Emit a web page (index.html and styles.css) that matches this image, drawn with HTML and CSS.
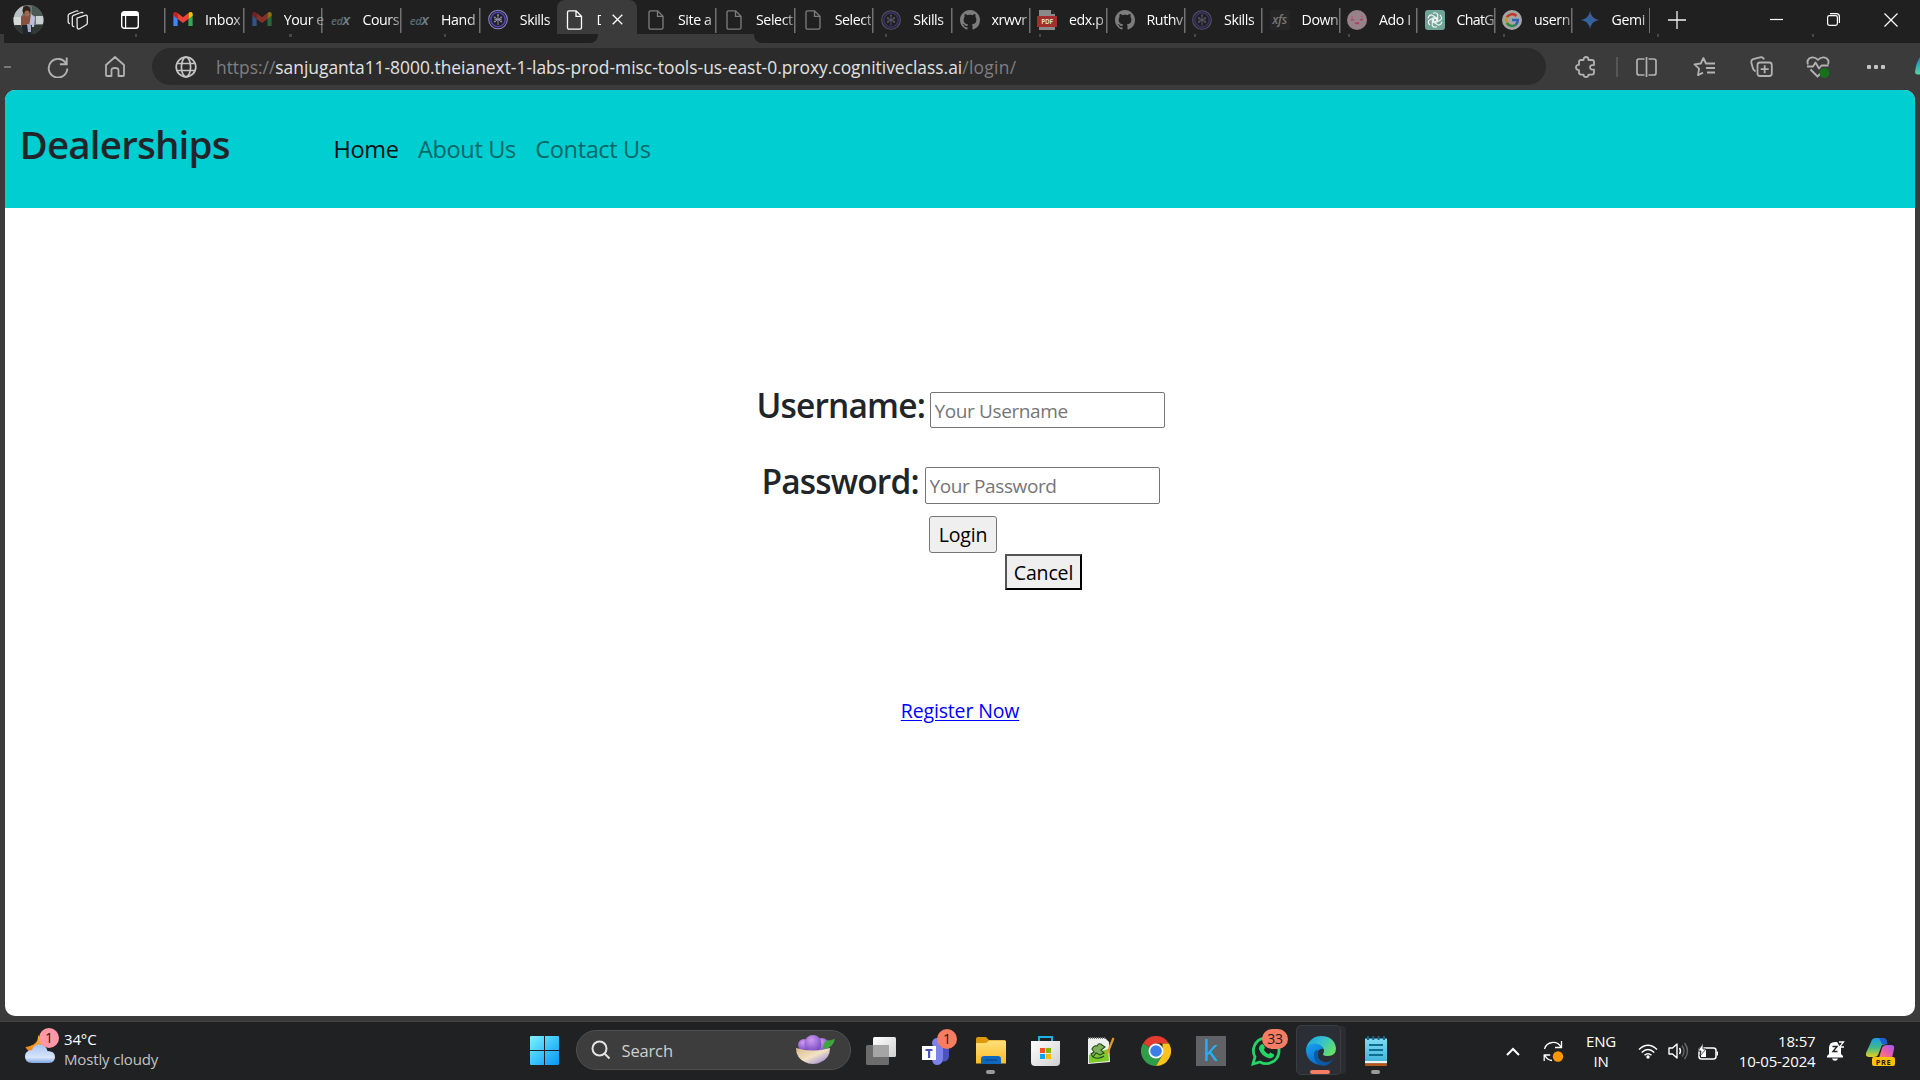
FILE: index.html
```html
<!DOCTYPE html>
<html lang="en">
<head>
<meta charset="utf-8">
<title>Dealerships</title>
<link rel="stylesheet" href="styles.css">
</head>
<body>
<svg class="defs" aria-hidden="true">
  <defs>
    <linearGradient id="g-win" x1="0" y1="0" x2="1" y2="1"><stop offset="0" stop-color="#7df3ff"/><stop offset=".5" stop-color="#3cc4fb"/><stop offset="1" stop-color="#0a93f5"/></linearGradient>
    <linearGradient id="g-folder" x1="0" y1="0" x2="0" y2="1"><stop offset="0" stop-color="#ffe07a"/><stop offset="1" stop-color="#fdbb25"/></linearGradient>
    <linearGradient id="g-cloud" x1="0" y1="0" x2="0" y2="1"><stop offset="0" stop-color="#a5c3f5"/><stop offset=".7" stop-color="#d8e5fb"/><stop offset="1" stop-color="#7ea3e4"/></linearGradient>
    <linearGradient id="g-moon" x1="0" y1="0" x2="0" y2="1"><stop offset="0" stop-color="#fdbd2c"/><stop offset="1" stop-color="#f07c16"/></linearGradient>
    <linearGradient id="g-bowl" x1="0" y1="0" x2="1" y2="1"><stop offset="0" stop-color="#d9b88a"/><stop offset=".5" stop-color="#f2e3c4"/><stop offset="1" stop-color="#8a74e0"/></linearGradient>
    <radialGradient id="g-yam" cx=".4" cy=".3" r=".8"><stop offset="0" stop-color="#cf9bf3"/><stop offset="1" stop-color="#6a3fb8"/></radialGradient>
    <linearGradient id="g-edge-top" x1="0" y1="0" x2="1" y2=".6"><stop offset="0" stop-color="#1b9de2"/><stop offset=".5" stop-color="#35c1cf"/><stop offset="1" stop-color="#62e06a"/></linearGradient>
    <linearGradient id="g-edge-low" x1="0" y1="0" x2=".6" y2="1"><stop offset="0" stop-color="#1aa4ee"/><stop offset="1" stop-color="#0668c8"/></linearGradient>
    <linearGradient id="g-gem" x1="0" y1="1" x2="1" y2="0"><stop offset="0" stop-color="#2c7f9c"/><stop offset=".5" stop-color="#345f9e"/><stop offset="1" stop-color="#5a5a86"/></linearGradient>
    <linearGradient id="g-cop-l" x1="0" y1="0" x2="0" y2="1"><stop offset="0" stop-color="#1b9be8"/><stop offset=".5" stop-color="#3fb98a"/><stop offset="1" stop-color="#e8cf1e"/></linearGradient>
    <linearGradient id="g-cop-r" x1="1" y1="0" x2="0" y2="1"><stop offset="0" stop-color="#9a5cf0"/><stop offset=".5" stop-color="#e65bb0"/><stop offset="1" stop-color="#ff8a5c"/></linearGradient>
    <linearGradient id="g-note" x1="0" y1="0" x2="0" y2="1"><stop offset="0" stop-color="#7fdcf2"/><stop offset="1" stop-color="#3fb2d8"/></linearGradient>
    <linearGradient id="g-side" x1="0" y1="0" x2="0" y2="1"><stop offset="0" stop-color="#1583d8"/><stop offset="1" stop-color="#4fd8a0"/></linearGradient>
    <linearGradient id="g-grey" x1="0" y1="0" x2="1" y2="1"><stop offset="0" stop-color="#fff"/><stop offset="1" stop-color="#cfcfcf"/></linearGradient>
    <clipPath id="c-avatar"><circle cx="15.500" cy="15" r="15"/></clipPath>

    <symbol id="i-gmail" viewBox="0 0 18 14"><path d="M0 2v11h4V6z" fill="#4285f4"/><path d="M18 2v11h-4V6z" fill="#34a853"/><path d="M14 1v5.500l4-3V1.500Q17-1 14 1z" fill="#fbbc04"/><path d="M4 1v5.500l-4-3V1.500Q1-1 4 1z" fill="#c5221f"/><path d="M4 1l5 3.800L14 1v5.500L9 10.200 4 6.500z" fill="#ea4335"/></symbol>
    <symbol id="i-skills" viewBox="0 0 20 20"><g fill="none" stroke="currentColor"><circle cx="10" cy="10" r="9.300" stroke-width="1.100"/><circle cx="10" cy="10" r="7.200" stroke-width="1.500" stroke="#5546b8"/></g><g fill="none" stroke="#8a86a8" stroke-width="1"><path d="M10 5v10.500M7 8l6 4M13 8l-6 4M6.500 10h7"/></g><g fill="#8a86a8"><circle cx="10" cy="5.500" r="1"/><circle cx="6.800" cy="8" r="1"/><circle cx="13.200" cy="8" r="1"/><circle cx="6.800" cy="12" r="1"/><circle cx="13.200" cy="12" r="1"/></g></symbol>
    <symbol id="i-file" viewBox="0 0 16 20"><path d="M1 2.500Q1 .8 2.600.8h7L15 6.300v11.200q0 1.700-1.600 1.700H2.600Q1 19.200 1 17.500zM9.500.8v5.600H15" fill="none" stroke="currentColor" stroke-width="1.300"/></symbol>
    <symbol id="i-github" viewBox="0 0 16 16"><path fill="currentColor" d="M8 0C3.580 0 0 3.580 0 8c0 3.540 2.290 6.530 5.470 7.590.4.070.55-.17.55-.38 0-.19-.01-.82-.01-1.490-2.010.37-2.530-.49-2.690-.94-.09-.23-.48-.94-.82-1.130-.28-.15-.68-.52-.01-.53.63-.01 1.080.58 1.230.82.72 1.210 1.870.87 2.330.66.07-.52.28-.87.51-1.070-1.780-.2-3.640-.89-3.640-3.950 0-.87.31-1.590.82-2.150-.08-.2-.36-1.020.08-2.120 0 0 .67-.21 2.200.82.64-.18 1.320-.27 2-.27s1.360.09 2 .27c1.530-1.040 2.200-.82 2.200-.82.44 1.100.16 1.920.08 2.120.51.56.82 1.270.82 2.150 0 3.070-1.870 3.750-3.650 3.950.29.25.54.73.54 1.480 0 1.070-.01 1.930-.01 2.200 0 .21.15.46.55.38A8 8 0 0 0 16 8c0-4.420-3.580-8-8-8z"/></symbol>
  </defs>
</svg>

<div class="browser">
  <header class="tabstrip">
    <div class="tabstrip-tools">
      <svg class="avatar" width="31" height="30" viewBox="0 0 31 30"><g clip-path="url(#c-avatar)"><rect width="31" height="30" fill="#6d7570"/><path d="M0 0h10v8L7 14H0z" fill="#b8c0c4"/><path d="M0 12h9v9H0z" fill="#d4d8d8"/><path d="M19 0h12v11H19z" fill="#4c5852"/><path d="M23 11h8v8h-8z" fill="#c9d0d2"/><path d="M0 20h31v10H0z" fill="#2f3834"/><path d="M8 12q6-5 13 0l-1 10H8z" fill="#84523f"/><path d="M18 9l4 3-1 10h-5z" fill="#b9bedc"/><ellipse cx="13.500" cy="5.500" rx="4" ry="4.500" fill="#2e201b"/><ellipse cx="14" cy="8.500" rx="2.600" ry="3" fill="#9c694f"/><path d="M9 20h10l-1 10h-8z" fill="#1d2530"/><path d="M14 19h4v8h-3z" fill="#a3a8c0"/></g></svg>
      <svg class="tool-workspaces" width="22" height="20" viewBox="0 0 22 20" fill="none" stroke="#e8e8e8" stroke-width="1.300" stroke-linejoin="round"><path d="M10 8.200L18 5.300q2.300-.6 2.300 1.500v6.400q0 1-1 1.500l-6.500 4q-2.300 1-2.600-1z"/><path d="M7.300 16.500q-2 .3-2-1.500V7q0-1.200 1.200-1.700L14 2.500q1.700-.4 2.200.8M3 13.500q-1.800 0-1.800-1.500V5.500q0-1.200 1.200-1.700L9 1q1.600-.5 2.300.5"/></svg>
      <svg class="tool-tabs" width="18" height="18" viewBox="0 0 18 18"><rect x=".7" y=".7" width="16.600" height="16.600" rx="2.500" fill="none" stroke="#fff" stroke-width="1.400"/><path d="M1 2.500Q1 1 2.500 1h13Q17 1 17 2.500V5H1zM4 5h1.200v12H4z" fill="#fff"/></svg>
    </div>

    <nav class="tabs">
      <div class="tab"><svg width="20" height="15"><use href="#i-gmail"/></svg><span>Inbox</span></div>
      <div class="tab dim"><svg width="20" height="15"><use href="#i-gmail"/></svg><span>Your e</span></div>
      <div class="tab"><b class="edx">ed<i>x</i></b><span>Cours</span></div>
      <div class="tab"><b class="edx">ed<i>x</i></b><span>Hand</span></div>
      <div class="tab"><svg class="violet" width="21" height="21"><use href="#i-skills"/></svg><span>Skills</span></div>
      <div class="tab active"><svg width="16" height="20"><use href="#i-file"/></svg><span>D</span><svg class="tab-close" width="11" height="11" viewBox="0 0 11 11"><path d="M.7.7l9.600 9.600M10.300.7L.7 10.300" stroke="#fff" stroke-width="1.300"/></svg></div>
      <div class="tab narrow grey"><svg width="16" height="20"><use href="#i-file"/></svg><span>Site a</span></div>
      <div class="tab grey"><svg width="16" height="20"><use href="#i-file"/></svg><span>Select</span></div>
      <div class="tab grey"><svg width="16" height="20"><use href="#i-file"/></svg><span>Select</span></div>
      <div class="tab dim"><svg class="violet" width="20" height="20"><use href="#i-skills"/></svg><span>Skills</span></div>
      <div class="tab narrow grey"><svg width="20" height="20"><use href="#i-github"/></svg><span>xrwvr</span></div>
      <div class="tab narrow"><svg width="20" height="20" viewBox="0 0 20 20"><path d="M2 0h12l4 4v16H2z" fill="#8a8a8a"/><path d="M14 0v4h4z" fill="#222"/><rect x="0" y="6" width="20" height="11" fill="#a32e2e"/><text class="pdf" x="10" y="14" text-anchor="middle">PDF</text></svg><span>edx.p</span></div>
      <div class="tab narrow grey"><svg width="20" height="20"><use href="#i-github"/></svg><span>Ruthv</span></div>
      <div class="tab narrow dim"><svg class="violet" width="20" height="20"><use href="#i-skills"/></svg><span>Skills</span></div>
      <div class="tab narrow"><b class="xfs">xfs</b><span>Down</span></div>
      <div class="tab narrow"><svg width="20" height="20" viewBox="0 0 20 20"><circle cx="10" cy="10" r="10" fill="#98828a"/><path d="M4 10q1.500-1 3 0M13 10q1.500-1 3 0M8 12.500q2 2 4 0" stroke="#b03a62" stroke-width="1.400" fill="none"/><circle cx="5" cy="7" r="1" fill="#c2557a"/><circle cx="15" cy="6.500" r="1" fill="#c2557a"/></svg><span>Ado I</span></div>
      <div class="tab narrow"><svg width="20" height="20" viewBox="0 0 20 20"><rect width="20" height="20" rx="3" fill="#6fa596"/><g fill="none" stroke="#f2f7f5" stroke-width="1.100"><path d="M8 3.200q3-1.200 4.700 1.200v5.800L10 11.800"/><path d="M8 3.200q3-1.200 4.700 1.200v5.800L10 11.800" transform="rotate(60 10 10)"/><path d="M8 3.200q3-1.200 4.700 1.200v5.800L10 11.800" transform="rotate(120 10 10)"/><path d="M8 3.200q3-1.200 4.700 1.200v5.800L10 11.800" transform="rotate(180 10 10)"/><path d="M8 3.200q3-1.200 4.700 1.200v5.800L10 11.800" transform="rotate(240 10 10)"/><path d="M8 3.200q3-1.200 4.700 1.200v5.800L10 11.800" transform="rotate(300 10 10)"/></g></svg><span class="tight">ChatG</span></div>
      <div class="tab narrow"><svg width="20" height="20" viewBox="0 0 20 20"><circle cx="10" cy="10" r="10" fill="#a5a5a5"/><g fill="none" stroke-width="2.600"><path d="M14.400 6A5.900 5.900 0 0 0 4.900 7.200" stroke="#c0392f"/><path d="M4.900 7.200a6 6 0 0 0 0 5.600" stroke="#c49a1c"/><path d="M4.900 12.800a5.900 5.900 0 0 0 8.800 2" stroke="#2f8a4a"/><path d="M13.700 14.800Q15.900 13 15.800 10H10" stroke="#2d62b5"/></g></svg><span>usern</span></div>
      <div class="tab narrow"><svg width="18" height="18" viewBox="0 0 18 18"><path d="M9 0q1.200 7.800 9 9-7.800 1.200-9 9-1.200-7.800-9-9 7.800-1.200 9-9z" fill="url(#g-gem)"/></svg><span>Gemi</span></div>
      <i class="tab-end"></i>
    </nav>
    <svg class="new-tab" width="18" height="18" viewBox="0 0 18 18"><path d="M9 0v18M0 9h18" stroke="#f2f2f2" stroke-width="1.300"/></svg>

    <div class="window-buttons">
      <svg width="13" height="13" viewBox="0 0 13 13"><path d="M0 6.500h13" stroke="#fff" stroke-width="1.200"/></svg>
      <svg width="13" height="13" viewBox="0 0 13 13" fill="none" stroke="#fff" stroke-width="1.200"><rect x=".6" y="2.600" width="9.800" height="9.800" rx="1.800"/><path d="M3 .6h6.500q2.900 0 2.900 2.900V10"/></svg>
      <svg width="14" height="14" viewBox="0 0 14 14"><path d="M.5.5l13 13M13.500.5l-13 13" stroke="#fff" stroke-width="1.200"/></svg>
    </div>
  </header>

  <div class="strip-edge"><div class="edge-left"></div><div class="edge-right"></div></div>

  <div class="toolbar">
    <div class="toolbar-nav">
      <svg class="dash" width="7" height="2"><rect width="7" height="2" fill="#777"/></svg>
      <svg class="reload" width="24" height="22" viewBox="0 0 24 22" fill="none" stroke="#b2b2b2" stroke-width="1.900"><path d="M20.300 8A9.300 9.300 0 1 0 21.300 12.500M20.700 1.500v6.800h-6.800"/></svg>
      <svg class="home" width="20" height="21" viewBox="0 0 20 21" fill="none" stroke="#b2b2b2" stroke-width="1.800" stroke-linejoin="round"><path d="M1 9l9-8 9 8v10q0 1-1 1h-4.500v-6q0-2-3.500-2t-3.500 2v6H2q-1 0-1-1z"/></svg>
    </div>
    <div class="address">
      <svg width="22" height="22" viewBox="0 0 22 22" fill="none" stroke="#c4c4c4" stroke-width="1.700"><circle cx="11" cy="11" r="9.800"/><ellipse cx="11" cy="11" rx="4.600" ry="9.800"/><path d="M2 7.500h18M2 14.500h18"/></svg>
      <p><span>https://</span><strong>sanjuganta11-8000.theianext-1-labs-prod-misc-tools-us-east-0.proxy.cognitiveclass.ai</strong><em>/login/</em></p>
    </div>
    <div class="toolbar-actions">
      <svg width="21" height="22" viewBox="0 0 21 22" fill="none" stroke="#b2b2b2" stroke-width="1.800" stroke-linejoin="round"><path d="M6 4h2.500Q8.500 1 11 1t2.500 3H17q2 0 2 2v3q-4-.3-4 2.300t4 2.300v3q0 2-2 2h-3.500q0 2.500-2.500 2.500t-2.500-2.500H6q-2 0-2-2v-2.500q-3 0-3-2.700t3-2.600V6q0-2 2-2z"/></svg>
      <i class="rule"></i>
      <svg class="split" width="21" height="20" viewBox="0 0 21 20" fill="none" stroke="#b2b2b2" stroke-width="1.700"><path d="M8.500 2H3.200Q1 2 1 4v12q0 2 2.200 2h5.300M12.500 2h5.300Q20 2 20 4v12q0 2-2.200 2h-5.300M10.500 0v20"/></svg>
      <svg class="fav" width="23" height="20" viewBox="0 0 23 20" fill="none" stroke="#b2b2b2" stroke-width="1.800" stroke-linejoin="round"><path d="M14 6.500h-1L10.400 1 7.800 6.500 1.500 7.400l4.600 4.300L5 18.200l5-2.600"/><path d="M14 6.500h8M13 11h9M14 15.500h8"/></svg>
      <svg class="coll" width="23" height="21" viewBox="0 0 23 21" fill="none" stroke="#b2b2b2" stroke-width="1.800"><path d="M5.500 15.500Q3 14 2.500 11L1.300 6.500Q1 4 3.200 3.200L10 1.300q3-.6 4 2.200"/><rect x="7.500" y="6.500" width="14.300" height="13.500" rx="2.500"/><path d="M14.700 9.200v8M10.700 13.200h8"/></svg>
      <svg class="heart" width="24" height="22" viewBox="0 0 24 22" fill="none" stroke="#b2b2b2" stroke-width="1.800" stroke-linejoin="round"><path d="M2 8.500Q.5 4.500 3.500 2.200 8-.2 12 3.800 16-.2 20.500 2.200 23.500 4.500 22 8.500"/><path d="M1 10.500h6l2.500-4 3.500 6 2.500-3h7M4.500 13.500l7 7 3-3"/><circle cx="18.500" cy="17" r="5" fill="#187018" stroke="none"/></svg>
      <svg class="dots" width="18" height="4"><g fill="#c4c4c4"><rect width="4" height="4" rx="1"/><rect x="7" width="4" height="4" rx="1"/><rect x="14" width="4" height="4" rx="1"/></g></svg>
      <svg class="side" width="5" height="20" viewBox="0 0 5 20"><path d="M5 0Q1 6 0 15q0 3 5 2.500z" fill="url(#g-side)"/></svg>
    </div>
  </div>

  <main class="page">
    <nav class="navbar">
      <h1>Dealerships</h1>
      <div class="links"><a class="current">Home</a><a>About Us</a><a>Contact Us</a></div>
    </nav>
    <form class="login">
      <div class="field"><label class="user-label">Username:</label><input type="text" placeholder="Your Username"></div>
      <div class="field field-pass"><label class="pass-label">Password:</label><input type="password" placeholder="Your Password"></div>
      <div class="actions"><button type="button" class="btn-login">Login</button><button type="button" class="btn-cancel">Cancel</button></div>
      <a class="register" href="#">Register Now</a>
    </form>
  </main>
</div>

<footer class="taskbar">
  <div class="weather">
    <div class="weather-icon">
      <svg width="31" height="30" viewBox="0 0 31 30"><path d="M13 2q1 10-12.500 12Q3 20 10 19q7-2 8-10z" fill="url(#g-moon)"/><path d="M7 30q-7-.5-7-6.500T7 17q2-6 8-5.500 6 .5 7.500 6.500Q30 18 30 24q0 5.500-6 6z" fill="url(#g-cloud)"/></svg>
      <span class="badge pink">1</span>
    </div>
    <p><span>34°C</span><span class="muted">Mostly cloudy</span></p>
  </div>

  <div class="apps">
    <svg class="start" width="29" height="29" viewBox="0 0 29 29"><path d="M0 1q0-1 1-1h13v14H0zM15 0h13q1 0 1 1v13H15zM0 15h14v14H1q-1 0-1-1zM15 15h14v13q0 1-1 1H15z" fill="url(#g-win)"/></svg>
    <div class="search">
      <svg width="20" height="20" viewBox="0 0 20 20" fill="none" stroke="#e4e4e4" stroke-width="2"><circle cx="8.500" cy="8.500" r="7"/><path d="M13.500 13.500l5 5"/></svg>
      <span>Search</span>
      <svg class="bowl" width="40" height="30" viewBox="0 0 40 30"><circle cx="8" cy="10" r="6" fill="url(#g-yam)"/><circle cx="26" cy="10" r="7" fill="url(#g-yam)"/><circle cx="17" cy="8.500" r="8.500" fill="url(#g-yam)"/><path d="M0 13q17 5 34 0 0 10-9 14-3 2-8 2t-8-2Q0 23 0 13z" fill="url(#g-bowl)"/><path d="M27 14q0-9 7-9-1 7-7 9zM28 14q4-10 11-10-2 9-11 10z" fill="#3fa53f"/></svg>
    </div>
    <div class="app"><svg width="30" height="28" viewBox="0 0 30 28"><rect y="8" width="23" height="20" rx="1.500" fill="#6c6c6c"/><rect x="7" width="23" height="20" rx="1.500" fill="url(#g-grey)"/><path d="M7 8h16v12H7z" fill="#a5a5a5"/></svg></div>
    <div class="app"><svg width="27" height="27" viewBox="0 0 27 27"><circle cx="15" cy="5" r="5" fill="#7b83eb"/><path d="M17 10h10v9q-2 6-8 4z" fill="#4b53bc"/><path d="M10 9h11v12q-1 6-6 6-4 0-5-5z" fill="#7b83eb"/><rect y="8" width="14" height="14" fill="#fff"/><path d="M3.500 11h7v2H8.200v7H6v-7H3.500z" fill="#4b53bc"/></svg><span class="badge coral teams-badge">1</span></div>
    <div class="app"><svg width="30" height="28" viewBox="0 0 30 28"><path d="M0 2q0-2 2-2h8l3 3h15q2 0 2 2v10H0z" fill="#dd9a0c"/><path d="M0 6h10l3-2.500h16q1 0 1 1.500v21.500H0z" fill="url(#g-folder)"/><path d="M5 27v-5q0-3 3-3h14q3 0 3 3v5z" fill="#1068bd"/><path d="M9 23h12" stroke="#074a90" stroke-width="1.300"/></svg><i class="run"></i></div>
    <div class="app"><svg width="29" height="30" viewBox="0 0 29 30"><path d="M8 6V1h13v5" fill="none" stroke="#1fb0e8" stroke-width="2"/><path d="M0 5h29v21q0 4-4 4H4q-4 0-4-4z" fill="url(#g-grey)"/><path d="M9 12h5v5H9z" fill="#f25022"/><path d="M15 12h5v5h-5z" fill="#7fba00"/><path d="M9 18h5v5H9z" fill="#00a4ef"/><path d="M15 18h5v5h-5z" fill="#ffb900"/></svg></div>
    <div class="app"><svg width="28" height="28" viewBox="0 0 28 28"><path d="M1 1h17l4 4 1 20L1 27z" fill="#eef0ee"/><path d="M2 18q10-3 19-6l1 12-20 2z" fill="#7ccb2a"/><path d="M5 12q2-4 5-3 2-4 5-1l3 2-4 3 3 3-4 2-4-2-3 4-2-3 3-2zM6 20q6 3 11-1" fill="#7fb05a" stroke="#234d1a" stroke-width="1.100"/><path d="M1 1h17" stroke="#777" stroke-width="2" stroke-dasharray="1 1"/><path d="M26.500 1L20 17" stroke="#e59a22" stroke-width="2.200"/></svg></div>
    <div class="app"><svg width="30" height="30" viewBox="0 0 30 30"><path d="M15 15L2 7.500A15 15 0 0 1 28 7.500H15z" fill="#e33b2e"/><path d="M2 7.500A15 15 0 0 0 15 30l6.500-11.200L15 15z" fill="#2e9e4b"/><path d="M28 7.500A15 15 0 0 1 15 30l6.500-11.200V7.500z" fill="#fcc31e"/><circle cx="15" cy="15" r="7.500" fill="#fff"/><circle cx="15" cy="15" r="5.800" fill="#3b7de9"/></svg></div>
    <div class="app"><span class="kindle">k</span></div>
    <div class="app"><svg width="30" height="30" viewBox="0 0 30 30"><path d="M2 28l2-7A12.800 12.800 0 1 1 9 26z" fill="none" stroke="#25d366" stroke-width="2.800"/><path d="M10 8.500q2-1.500 3 1l1 2.500-1.200 1.800q1.500 3 4.700 4.500l1.800-1.800 3 1.500q1.500.8 0 3-2 2-5 1Q10 19.500 8 13q-.5-2.500 2-4.500z" fill="#25d366"/></svg><span class="badge coral wa-badge">33</span></div>
    <div class="app"><div class="tile"></div><svg class="edge" width="30" height="30" viewBox="0 0 30 30"><path d="M0 15A15 15 0 0 1 15 0q13 0 15 12 0 8-8 8-5 0-5-2 2-3 0-6-5-6-12-2-5 3-5 5z" fill="url(#g-edge-top)"/><path d="M0 15q0-7 8-7.500 7 0 9.500 5-6 0-6 6 1 9 11 8.500A15 15 0 0 1 0 15z" fill="url(#g-edge-low)"/><path d="M12 14q-3 9 6 12 6 1 9.500-3.500-3 6.500-11 7.500Q8 27 8 19q0-5 4-5z" fill="#0c59a4"/></svg><i class="run active-run"></i></div>
    <div class="app"><svg width="22" height="30" viewBox="0 0 22 30"><rect y="2.500" width="22" height="24" fill="url(#g-note)"/><path d="M0 25h22v2.500H0z" fill="#f0f2f2"/><path d="M0 27.500h22V29q0 1-1 1H1q-1 0-1-1z" fill="#b5561a"/><path d="M4 9h14M4 14h14M4 19h14" stroke="#0d6d92" stroke-width="1.800"/><path d="M3 0v4M8.300 0v4M13.600 0v4M19 0v4" stroke="#17668c" stroke-width="2"/></svg><i class="run"></i></div>
  </div>

  <div class="tray">
    <svg width="14" height="9" viewBox="0 0 14 9"><path d="M1 8l6-6 6 6" fill="none" stroke="#fff" stroke-width="2"/></svg>
    <svg class="sync" width="21" height="21" viewBox="0 0 21 21" fill="none" stroke="#fff" stroke-width="1.300"><path d="M1.500 8A9 9 0 0 1 18 6M18.500 0v6.500H12M9 19.500Q4 19 2 14.500M1.200 20v-6h6"/><circle cx="15" cy="15.500" r="5.200" fill="#ff9800" stroke="none"/></svg>
    <p class="lang"><span>ENG</span><span>IN</span></p>
    <svg class="wifi" width="20" height="15" viewBox="0 0 20 15" fill="none" stroke="#fff" stroke-width="1.500"><path d="M1 5.500q9-8.500 18 0M3.700 8.500q6.300-6 12.600 0M6.500 11.300q3.500-3.200 7 0"/><circle cx="10" cy="13" r="1.700" fill="#fff" stroke="none"/></svg>
    <svg class="sound" width="21" height="18" viewBox="0 0 21 18" fill="none" stroke="#fff" stroke-width="1.400"><path d="M1 6h3.500L9 2v14l-4.500-4H1z" stroke-linejoin="round"/><path d="M11.500 6q2 3 0 6"/><path d="M14 3.500q4 5.500 0 11M16.500 1q6 8 0 16" stroke="#686868"/></svg>
    <svg class="battery" width="21" height="17" viewBox="0 0 21 17"><rect x="1" y="5" width="17" height="11" rx="2.500" fill="none" stroke="#fff" stroke-width="1.500"/><path d="M3 7h5v7H3zM18.500 8.500H20v4h-1.500z" fill="#fff"/><path d="M5 0L0 8h3l-1 5 6-7H5z" fill="#fff" stroke="#202124" stroke-width=".8"/></svg>
    <p class="clock"><span>18:57</span><span>10-05-2024</span></p>
    <svg class="bell" width="18" height="20" viewBox="0 0 18 20"><path d="M0 16.500V15l2-2V7q0-6 6-6h6v12l2 2v1.500zM5 17.500h6q-.5 2.200-3 2.200t-3-2.200z" fill="#fff"/><path d="M5.500 5.500h4.500L6 10.500h4.500" fill="none" stroke="#202124" stroke-width="1.400"/><path d="M9.500 0H18v6h-5z" fill="#202124"/><path d="M12 1h4.500L12.500 6H17" fill="none" stroke="#fff" stroke-width="1.300"/></svg>
    <svg class="copilot" width="30" height="29" viewBox="0 0 30 29"><path d="M5 4Q6 0 10 0h7q4 0 4 6l-5 1-4 10q-1 2-4 2H3q-4 0-3-4z" fill="url(#g-cop-l)"/><path d="M13 0h4q4 0 4.500 6H16z" fill="#1c5fd0"/><path d="M16 10q1-3 5-3h4q4 0 3 4l-2 9H13z" fill="url(#g-cop-r)"/><rect x="6" y="19" width="23" height="9" rx="2" fill="#fcc400"/><text class="pre" x="17.500" y="26.500" text-anchor="middle">PRE</text></svg>
  </div>
</footer>
</body>
</html>
```
FILE: styles.css
```css
* { box-sizing: border-box; margin: 0; padding: 0; }

body {
  width: 1920px;
  height: 1080px;
  overflow: hidden;
  background: #3b3b3b;
  font-family: "Open Sans", "Noto Sans", sans-serif;
}

svg { display: block; flex: none; }
p, span { white-space: nowrap; }
.defs { position: absolute; width: 0; height: 0; }

.browser { height: 1021px; }

/* Tab strip */
.tabstrip {
  display: flex;
  height: 34px;
  background: #202020;
}

.tabstrip-tools {
  display: flex;
  align-items: flex-start;
  width: 164px;
  padding: 4.500px 0 0 12.500px;
}
.tool-workspaces { margin: 5px 0 0 23.500px; }
.tool-tabs { margin: 6.500px 0 0 32px; }

.tabs { display: flex; width: 1486px; }

.tab {
  display: flex;
  flex: none;
  align-items: center;
  gap: 12px;
  width: 78.700px;
  padding: 5px 0 0 9px;
  color: #fff;
  font-size: 14.200px;
  line-height: 20px;
  letter-spacing: -.4px;
  background: linear-gradient(#707070, #707070) 0 8px / 1.500px 25px no-repeat;
}
.tab > :first-child { width: 20px; flex: none; }
.tab span {
  -webkit-mask-image: linear-gradient(90deg, #000 26px, transparent 46px);
  mask-image: linear-gradient(90deg, #000 26px, transparent 46px);
}
.tab .tight { letter-spacing: -.7px; }
.tab.narrow { width: 77.500px; padding-left: 8.500px; }
.tab.dim > svg { opacity: .5; }
.tab.grey > svg { color: #7d7d7d; }
.tab .violet { color: #8d84bd; }

.tab.active {
  width: 80px;
  padding-left: 9px;
  gap: 13px;
  border-radius: 8px 8px 0 0;
  background: #3b3b3b;
}
.tab.active > :first-child { width: 17px; }
.tab.active span { flex: none; width: 5px; margin-right: -2px; overflow: hidden; }
.tab.active + .tab { background: none; }
.tab.grey > svg[width="16"] { width: 16px; margin: 0 2px; }
.tab-end { width: 1.500px; height: 25px; margin-top: 8px; background: #707070; }

.edx { color: #5a6b70; font: italic 600 11px/20px "Open Sans", sans-serif; text-align: center; }
.edx i { color: #6f8388; font-size: 15px; }
.xfs { color: #777; font: italic 600 12px/20px "Open Sans", sans-serif; text-align: center; background: #262626; }
.pdf { fill: #ddb; font: 700 6.500px "Open Sans", sans-serif; }

.new-tab { margin: 11px 0 0 18px; }

.window-buttons {
  display: flex;
  align-items: center;
  gap: 44px;
  margin-left: auto;
  padding: 5px 22.500px 0 0;
}

/* Lower edge of the strip */
.strip-edge { display: flex; justify-content: space-between; height: 9px; padding-left: 4px; }
.edge-left, .edge-right {
  background: #202020 repeating-linear-gradient(90deg, #484848 0 2px, #202020 2px 154.500px) 131px 0 / 100% 3px no-repeat;
}
.edge-left { width: 594px; border-radius: 0 0 8px 0; }
.edge-right { width: 1166px; border-radius: 0 0 0 8px; }

/* Toolbar */
.toolbar { display: flex; align-items: center; height: 47px; }
.toolbar-nav { display: flex; align-items: center; width: 152px; padding-left: 4px; }
.reload { margin-left: 35px; }
.home { margin-left: 35px; }

.address {
  display: flex;
  align-items: center;
  gap: 19.500px;
  width: 1394px;
  height: 37px;
  padding-left: 22.500px;
  border-radius: 19px;
  background: #2b2b2b;
}
.address p { color: #7f7f7f; font-size: 17.400px; line-height: 24px; }
.address strong { font-weight: 400; color: #e2e2e2; }
.address em { font-style: normal; letter-spacing: .3px; }

.toolbar-actions { display: flex; align-items: center; flex: 1; padding-left: 28.500px; }
.rule { width: 2px; height: 20px; margin-left: 20px; background: #565656; }
.split { margin-left: 18.500px; }
.fav { margin-left: 36px; }
.coll { margin-left: 34px; }
.heart { margin-left: 33px; }
.dots { margin-left: 36.500px; }
.side { margin-left: auto; }

/* Web page */
.page {
  display: flex;
  flex-direction: column;
  width: 1910px;
  height: 926px;
  margin-left: 5px;
  border-radius: 10px;
  overflow: hidden;
  background: #fff;
}

.navbar { display: flex; height: 118px; padding-left: 14.500px; background: #00ced1; }
.navbar h1 {
  width: 314px;
  padding-top: 30px;
  color: #212529;
  font-size: 38.500px;
  font-weight: 600;
  line-height: 48px;
  letter-spacing: -.8px;
}
.links { display: flex; gap: 19.500px; padding-top: 43px; font-size: 23.500px; line-height: 32px; letter-spacing: -.35px; }
.links a { color: #016768; }
.links .current { color: #001415; }

.login { display: flex; flex-direction: column; align-items: center; padding-top: 184px; }
.field { display: flex; align-items: center; gap: 4px; height: 36px; }
.field-pass { height: 37px; margin-top: 39px; }
.field label {
  padding-bottom: 10px;
  color: #212529;
  font-size: 33.500px;
  font-weight: 600;
  line-height: 40px;
  letter-spacing: -.85px;
}
.user-label { width: 170px; padding-left: 1px; }
.pass-label { width: 160px; padding-left: 1px; }
.field input {
  width: 235px;
  height: 100%;
  padding: 2px 4px 0;
  border: 1px solid #767676;
  border-radius: 2px;
  background: #fff;
  font: 19px "Open Sans", sans-serif;
  letter-spacing: -.38px;
}
.field-pass input { padding-top: 0; }
.field input::placeholder { color: #757575; opacity: 1; }

.actions { display: flex; width: 153px; height: 74px; margin: 12px 0 0 90px; gap: 8px; }
.actions button {
  flex: none;
  padding-left: 1px;
  background: #efefef;
  color: #000;
  font: 19.500px/28px "Open Sans", sans-serif;
  letter-spacing: -.15px;
}
.btn-login { width: 68px; height: 37px; border: 1px solid #767676; border-radius: 3px; }
.actions .btn-cancel { width: 77px; height: 36px; margin-top: 38px; padding-top: 2px; border: 2px outset #000; }
.register { margin-top: 107px; color: #0000ff; font-size: 19.500px; line-height: 28px; letter-spacing: -.15px; text-underline-offset: 2px; }

/* Taskbar */
.taskbar {
  display: flex;
  height: 59px;
  border-top: 1px solid #424242;
  background: #202122;
  color: #fff;
  font-size: 15px;
  letter-spacing: -.15px;
}
.taskbar p { display: flex; flex-direction: column; line-height: 20px; }

.weather { display: flex; width: 517px; padding: 7px 0 0 25px; }
.weather-icon { position: relative; width: 39px; padding-top: 4px; }
.muted { color: #c4c4c4; }

.badge {
  position: absolute;
  height: 20px;
  min-width: 20px;
  border-radius: 10px;
  color: #1c1c1c;
  font-size: 14px;
  line-height: 20px;
  text-align: center;
}
.pink { left: 14px; top: -1px; background: #ff98a4; }
.coral { background: #f67c63; }
.teams-badge { left: 29px; top: 7px; }
.wa-badge { left: 24px; top: 7px; width: 26px; }

.apps { display: flex; width: 970px; }
.start { margin: 14px 17px 0 13px; }
.search {
  display: flex;
  align-items: center;
  width: 275px;
  height: 40px;
  margin: 8px 2px 0 0;
  padding: 0 14px 0 13.500px;
  border: 1px solid #505050;
  border-radius: 20px;
  background: #3d3d3d;
  color: #cfcfcf;
  font-size: 16.500px;
}
.search span { margin-left: 11px; }
.bowl { margin-left: auto; }

.app { position: relative; display: flex; align-items: center; justify-content: center; width: 55px; height: 58px; }
.tile {
  position: absolute;
  inset: 3px 7px 5px 3px;
  border: 1px solid #3a3d42;
  border-radius: 5px;
  background: #2b2e34;
  box-shadow: 6px 0 0 -1px #2a2c30;
}
.edge { position: relative; }
.run { position: absolute; left: 23px; bottom: 6px; width: 9px; height: 4px; border-radius: 2px; background: #9a9a9a; }
.active-run { left: 17px; width: 20px; background: #f67c63; }
.kindle {
  width: 30px;
  height: 30px;
  background: #616266;
  color: #20b2f0;
  font-size: 29px;
  line-height: 28px;
  text-align: center;
}

.tray { display: flex; align-items: center; flex: 1; padding-left: 19px; }
.sync { margin-left: 23px; }
.lang { width: 40px; margin-left: 17px; align-items: center; }
.wifi { margin-left: 17px; }
.sound { margin-left: 10px; }
.battery { margin-left: 9px; }
.clock { width: 96.500px; align-items: flex-end; }
.bell { margin-left: 11px; }
.copilot { margin: 2px 0 0 21px; }
.pre { fill: #1d1a10; font: 700 7.500px "Open Sans", sans-serif; letter-spacing: .5px; }
```
